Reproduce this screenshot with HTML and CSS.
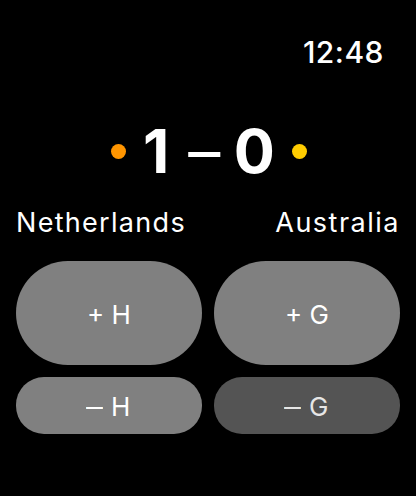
FILE: index.html
```html
<!DOCTYPE html>
<html>
<head>
<meta charset="utf-8">
<link rel="stylesheet" href="styles.css">
</head>
<body>
<div class="screen">
  <div class="status"><span class="time">12:48</span></div>
  <div class="score">
    <span class="dot dot-home"></span>
    <span class="score-text">1<span class="score-dash">–</span>0</span>
    <span class="dot dot-away"></span>
  </div>
  <div class="teams">
    <span class="team">Netherlands</span>
    <span class="team">Australia</span>
  </div>
  <div class="buttons">
    <div class="btn btn-big">+ H</div>
    <div class="btn btn-big">+ G</div>
    <div class="btn btn-small"><span class="minus">–</span> H</div>
    <div class="btn btn-small btn-dim"><span class="minus">–</span> G</div>
  </div>
</div>
</body>
</html>
```
FILE: styles.css
```css
html, body {
  margin: 0;
  padding: 0;
  background: #000;
}
body {
  width: 416px;
  height: 496px;
  overflow: hidden;
  font-family: Inter, "Liberation Sans", sans-serif;
  color: #fff;
}
.screen {
  padding: 0 16px;
}
.status {
  display: flex;
  justify-content: flex-end;
  padding-top: 32px;
  padding-right: 16px;
  height: 40px;
}
.time {
  font-size: 30px;
  font-weight: 500;
  line-height: 40px;
  letter-spacing: 0.5px;
}
.score {
  display: flex;
  align-items: center;
  justify-content: center;
  margin-top: 44px;
  height: 70px;
  gap: 17px;
  padding-left: 2px;
}
.score-text {
  font-size: 61px;
  font-weight: 700;
  line-height: 70px;
}
.score-dash {
  display: inline-block;
  font-weight: 400;
  margin: 0 14px 0 20px;
  transform: scaleX(1.05);
}
.dot {
  width: 15px;
  height: 15px;
  border-radius: 50%;
}
.dot-home { background: #ff9500; }
.dot-away { background: #ffcc00; }
.teams {
  display: flex;
  justify-content: space-between;
  margin-top: 19px;
  height: 36px;
  align-items: center;
}
.team {
  font-size: 27px;
  font-weight: 400;
  line-height: 36px;
  letter-spacing: 1.3px;
}
.team:last-child {
  letter-spacing: 1.5px;
}
.buttons {
  display: grid;
  grid-template-columns: 1fr 1fr;
  column-gap: 12px;
  row-gap: 12px;
  margin-top: 20px;
}
.btn {
  display: flex;
  align-items: center;
  justify-content: center;
  background: #808080;
  font-size: 26px;
  font-weight: 400;
  white-space: pre;
  padding-top: 2px;
  box-sizing: border-box;
}
.minus {
  display: inline-block;
  transform: scaleX(1.3);
  margin-right: 3px;
}
.btn-big {
  height: 104px;
  border-radius: 52px;
}
.btn-small {
  height: 57px;
  border-radius: 28px;
}
.btn-dim {
  background: #545454;
  color: #e6e6e6;
}
```
